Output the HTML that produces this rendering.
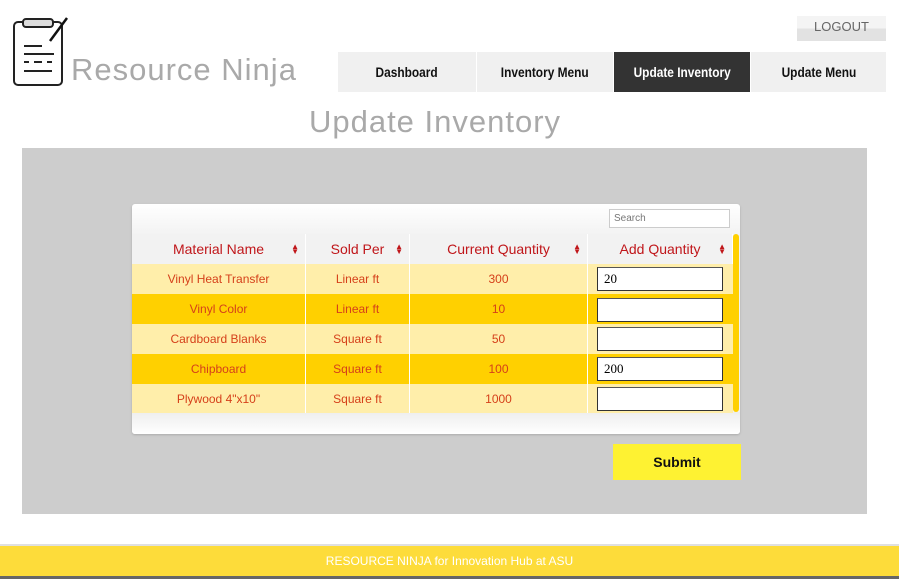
<!DOCTYPE html>
<html><head><style>
*{margin:0;padding:0;box-sizing:border-box}
body{width:899px;height:579px;background:#fff;position:relative;font-family:"Liberation Sans",sans-serif;overflow:hidden}
.abs{position:absolute}
.nav{top:52px;height:40px;background:#f0f0f0;font:bold 14px "Liberation Sans Narrow","Liberation Sans",sans-serif;color:#111;display:flex;align-items:center;justify-content:center;transform-origin:center}
.nav span{display:inline-block;transform:scaleX(.85)}
.cell{position:absolute;display:flex;align-items:center;justify-content:center;font-size:12px;color:#d5401a;border-right:1px solid #fff}
.hd{color:#c0161a;font-size:14px;background:#f2f2f2}
.arr{position:absolute;right:6px;font-size:8px;color:#c0161a;line-height:5px}
input{position:absolute;width:126px;height:24px;border:1px solid #333;border-top-color:#555;background:#fff;font:13px "Liberation Serif",serif;padding-left:6px}
</style></head><body>
<svg class="abs" style="left:12px;top:16px" width="60" height="72" viewBox="0 0 60 72">
<rect x="2" y="6" width="48" height="63" rx="4" fill="none" stroke="#222" stroke-width="2"/>
<rect x="11" y="3" width="30" height="8" rx="3" fill="#ddd" stroke="#222" stroke-width="2"/>
<line x1="38" y1="25" x2="55" y2="2" stroke="#111" stroke-width="2.5"/>
<line x1="12" y1="30" x2="30" y2="30" stroke="#222" stroke-width="2"/>
<line x1="12" y1="38" x2="42" y2="38" stroke="#222" stroke-width="2"/>
<line x1="12" y1="46" x2="17" y2="46" stroke="#222" stroke-width="2"/>
<line x1="22" y1="46" x2="30" y2="46" stroke="#222" stroke-width="2"/>
<line x1="35" y1="46" x2="40" y2="46" stroke="#222" stroke-width="2"/>
<line x1="12" y1="55" x2="40" y2="55" stroke="#222" stroke-width="2"/>
</svg>
<div class="abs" style="left:71px;top:52px;font-size:31px;color:#a9a9a9;letter-spacing:1px">Resource Ninja</div>
<div class="abs" style="left:797px;top:16px;width:89px;height:25px;background:linear-gradient(#f4f4f4 50%,#e2e2e2 50%);color:#666;font-size:13px;text-align:center;line-height:22px">LOGOUT</div>
<div class="abs nav" style="left:338px;width:138px"><span>Dashboard</span></div>
<div class="abs nav" style="left:477px;width:136px"><span>Inventory Menu</span></div>
<div class="abs nav" style="left:614px;width:136px;background:#333;color:#fff"><span>Update Inventory</span></div>
<div class="abs nav" style="left:751px;width:135px"><span>Update Menu</span></div>
<div class="abs" style="left:0;width:870px;top:104px;text-align:center;font-size:31px;color:#a9a9a9;letter-spacing:1px">Update Inventory</div>
<div class="abs" style="left:22px;top:148px;width:845px;height:366px;background:#cdcdcd"></div>
<div class="abs" style="left:132px;top:204px;width:608px;height:230px;background:linear-gradient(#fff,#f3f3f3 30px);border-radius:3px;box-shadow:0 1px 2px #aaa"></div>
<div class="abs" style="left:609px;top:209px;width:121px;height:19px;border:1px solid #ccc;background:#fff;font-size:10px;color:#777;padding:3px 4px">Search</div>
<div class="abs" style="left:132px;top:412px;width:608px;height:22px;background:linear-gradient(#eee,#fff);border-radius:0 0 3px 3px"></div>
<div class="cell hd" style="left:132px;top:234px;width:174px;height:30px">Material Name<span class="arr">▲<br>▼</span></div>
<div class="cell hd" style="left:306px;top:234px;width:104px;height:30px">Sold Per<span class="arr">▲<br>▼</span></div>
<div class="cell hd" style="left:410px;top:234px;width:178px;height:30px">Current Quantity<span class="arr">▲<br>▼</span></div>
<div class="cell hd" style="left:588px;top:234px;width:145px;height:30px">Add Quantity<span class="arr">▲<br>▼</span></div>
<div class="abs" style="left:132px;top:264px;width:601px;height:30px;background:#ffeeaa"></div>
<div class="abs" style="left:132px;top:294px;width:601px;height:30px;background:#ffd000"></div>
<div class="abs" style="left:132px;top:324px;width:601px;height:30px;background:#ffeeaa"></div>
<div class="abs" style="left:132px;top:354px;width:601px;height:30px;background:#ffd000"></div>
<div class="abs" style="left:132px;top:384px;width:601px;height:29px;background:#ffeeaa"></div>
<div class="abs" style="left:132px;top:264px;width:601px;height:149px">
<div class="cell" style="left:0;top:0;width:174px;height:30px">Vinyl Heat Transfer</div><div class="cell" style="left:174px;top:0;width:104px;height:30px">Linear ft</div><div class="cell" style="left:278px;top:0;width:178px;height:30px">300</div>
<div class="cell" style="left:0;top:30px;width:174px;height:30px">Vinyl Color</div><div class="cell" style="left:174px;top:30px;width:104px;height:30px">Linear ft</div><div class="cell" style="left:278px;top:30px;width:178px;height:30px">10</div>
<div class="cell" style="left:0;top:60px;width:174px;height:30px">Cardboard Blanks</div><div class="cell" style="left:174px;top:60px;width:104px;height:30px">Square ft</div><div class="cell" style="left:278px;top:60px;width:178px;height:30px">50</div>
<div class="cell" style="left:0;top:90px;width:174px;height:30px">Chipboard</div><div class="cell" style="left:174px;top:90px;width:104px;height:30px">Square ft</div><div class="cell" style="left:278px;top:90px;width:178px;height:30px">100</div>
<div class="cell" style="left:0;top:120px;width:174px;height:29px">Plywood 4"x10"</div><div class="cell" style="left:174px;top:120px;width:104px;height:29px">Square ft</div><div class="cell" style="left:278px;top:120px;width:178px;height:29px">1000</div>
</div>
<input style="left:597px;top:267px" value="20">
<input style="left:597px;top:298px">
<input style="left:597px;top:327px">
<input style="left:597px;top:357px" value="200">
<input style="left:597px;top:387px">
<div class="abs" style="left:733px;top:234px;width:6px;height:178px;background:#ffd000;border-radius:3px"></div>
<div class="abs" style="left:613px;top:444px;width:128px;height:36px;background:#fef232;font-weight:bold;font-size:14px;color:#111;text-align:center;line-height:36px">Submit</div>
<div class="abs" style="left:0;top:544px;width:899px;height:3px;background:#e0e0e0"></div>
<div class="abs" style="left:0;top:546px;width:899px;height:30px;background:#fddc3a;color:#fff;font-size:12px;text-align:center;line-height:30px">RESOURCE NINJA for Innovation Hub at ASU</div>
<div class="abs" style="left:0;top:576px;width:899px;height:3px;background:#666"></div>
</body></html>
